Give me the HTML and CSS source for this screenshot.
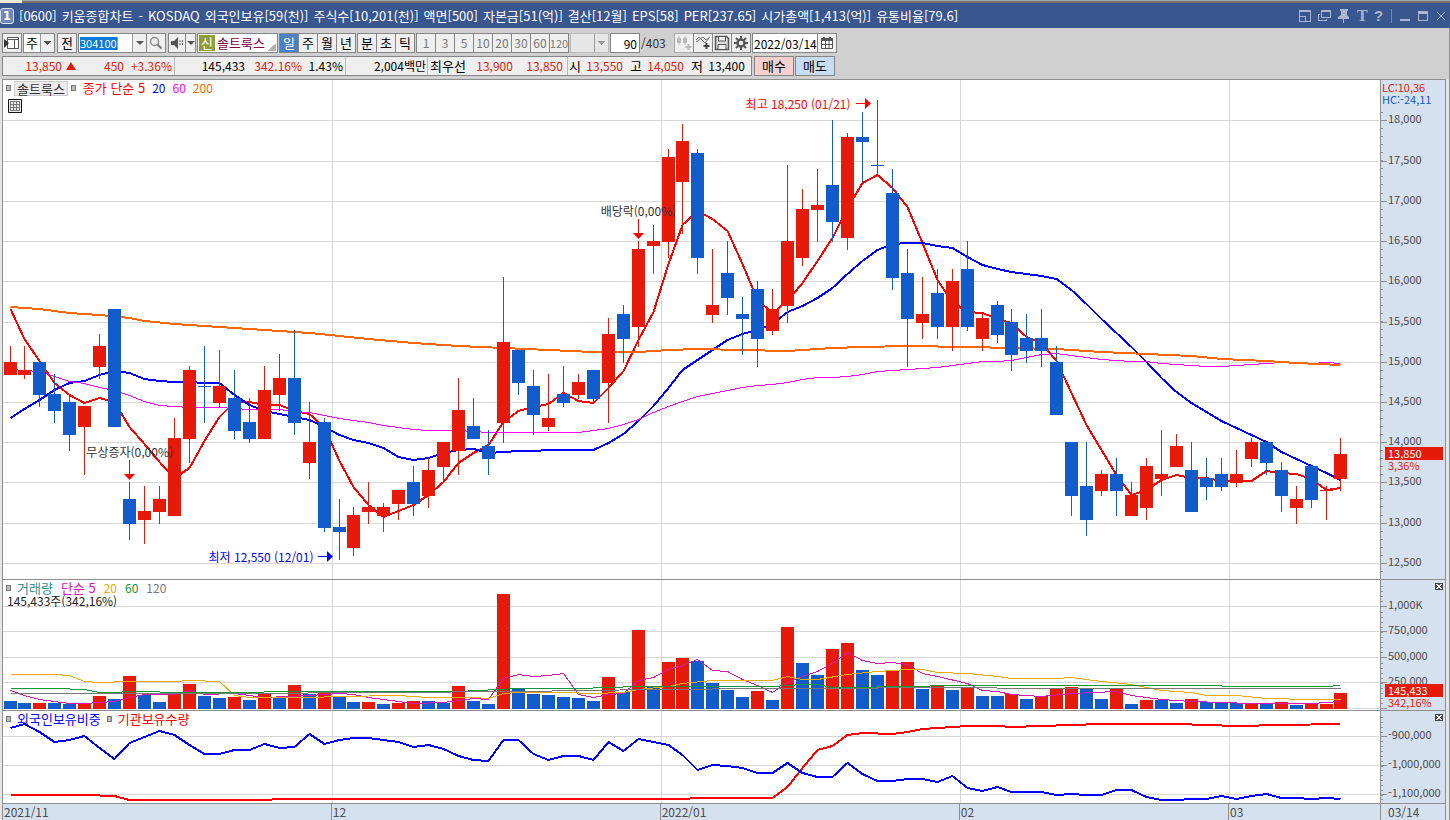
FILE: index.html
```
<!DOCTYPE html>
<html lang="ko">
<head>
<meta charset="utf-8">
<title>[0600] 키움종합차트</title>
<link rel="stylesheet" href="styles.css">
</head>
<body>
<div class="edge"><span class="edge-tab"></span></div>
<header class="titlebar">
  <span class="win-no">1</span>
  <h1 class="title"><span>[0600]</span> <span>키움종합차트</span> <span>-</span> <span>KOSDAQ</span> <span>외국인보유[59(천)]</span> <span>주식수[10,201(천)]</span> <span>액면[500]</span> <span>자본금[51(억)]</span> <span>결산[12월]</span> <span>EPS[58]</span> <span>PER[237.65]</span> <span>시가총액[1,413(억)]</span> <span>유통비율[79.6]</span></h1>
  <div class="win-tools">
    <button aria-label="화면 분할"><svg width="12" height="13" viewBox="0 0 12 13"><path d="M.5 1.500h11v11H.5zM0 2.500h12M1 7.500h5.500V12" class="ln crisp"/></svg></button>
    <button aria-label="화면 복사"><svg width="13" height="13" viewBox="0 0 13 13"><path d="M3.500 1.500h9v7h-9zM3 2.500h10M2 5.500H.5v6h8V10" class="ln crisp"/></svg></button>
    <button aria-label="고정"><svg width="12" height="14" viewBox="0 0 12 14"><path d="M2 0h8v2H9v4l2 2v2H6v4H5v-4H0V8l3-2V2H2z" class="fl"/></svg></button>
    <button aria-label="글꼴" class="glyph serif">T</button>
    <button aria-label="도움말" class="glyph">?</button>
    <span class="sep"></span>
    <button aria-label="최소화"><svg width="11" height="13" viewBox="0 0 11 13"><path d="M0 10h10v2H0z" class="fl"/></svg></button>
    <button aria-label="최대화"><svg width="11" height="13" viewBox="0 0 11 13"><path d="M0 2h10v10H0zM1 5v6h8V5z" fill-rule="evenodd" class="fl"/></svg></button>
    <button aria-label="닫기"><svg width="10" height="13" viewBox="0 0 10 13"><path d="M1 3l8 8M9 3l-8 8" class="ln"/></svg></button>
  </div>
</header>

<section class="toolbar">
  <div class="bar">
    <button class="btn w20" aria-label="메뉴 펼치기"><svg width="16" height="16" viewBox="0 0 16 16"><path d="M3.500 2.500h11v11h-11zM3 4.500h12M10.500 4v9" fill="#fff" stroke="#555"/><path d="M0 4l5 4-5 5z" fill="#333"/></svg></button>
    <select class="pick w31" aria-label="종목 구분"><option>주</option></select>
    <button class="btn w20 gap">전</button>
    <div class="code"><input type="text" value="304100" aria-label="종목코드" class="code-in"><button class="drop" aria-label="종목 목록"></button></div>
    <button class="btn w20 join" aria-label="검색"><svg width="14" height="14" viewBox="0 0 14 14"><circle cx="5.500" cy="5.500" r="4" fill="none" stroke="#8a8a8a" stroke-width="1.500"/><path d="M8.500 8.500l4 4" stroke="#777" stroke-width="2"/></svg></button>
    <button class="btn w18 gap" aria-label="소리"><svg width="14" height="14" viewBox="0 0 14 14"><path d="M1 5h3l4-4v12L4 9H1z" fill="#555"/><path d="M10 4v6M12.500 4v6" stroke="#666" stroke-dasharray="2 1"/></svg></button>
    <button class="drop framed" aria-label="소리 설정"></button>
    <div class="stock"><span class="badge">신</span><span class="name">솔트룩스</span></div>
    <div class="group"><button class="on">일</button><button>주</button><button>월</button><button>년</button></div>
    <div class="group"><button>분</button><button>초</button><button>틱</button></div>
    <div class="group off"><button disabled>1</button><button disabled>3</button><button disabled>5</button><button disabled>10</button><button disabled>20</button><button disabled>30</button><button disabled>60</button><button disabled>120</button></div>
    <select class="pick w39 dim" aria-label="분틱 간격" disabled><option></option></select>
    <input class="count" type="text" value="90" aria-label="조회 봉수"><span class="total">/403</span>
    <div class="icons">
      <button class="btn w20 dim" aria-label="봉 추가"><svg width="16" height="16" viewBox="0 0 16 16"><path d="M1 3h4v5H1zM7 3h4v5H7zM2.500 1h1v9h-1zM8.500 1h1v9h-1z" fill="#bbb"/><path d="M12.500 9v6M9.500 12h6" stroke="#bbb" stroke-width="2"/></svg></button>
      <button class="btn w20" aria-label="지표 추가"><svg width="16" height="16" viewBox="0 0 16 16"><path d="M1 5l3-3 6 6 4-5M1 7l3-2 4-3 3 3 4-3" fill="none" stroke="#777"/><path d="M11.500 8v6M8.500 11h6" stroke="#444" stroke-width="2"/></svg></button>
      <button class="btn w20" aria-label="저장"><svg width="16" height="16" viewBox="0 0 16 16"><path d="M1.500 1.500h11l2 2v11h-13z" fill="#ddd" stroke="#555" stroke-width="1.500"/><path d="M4.500 2v4h7V2M4 14V9.500h8V14" fill="#eee" stroke="#555"/></svg></button>
      <button class="btn w20" aria-label="설정"><svg width="14" height="14" viewBox="0 0 14 14"><circle cx="7" cy="7" r="3.500" fill="none" stroke="#555" stroke-width="2.500"/><path d="M7 0v3M7 11v3M0 7h3M11 7h3M2 2l2 2M10 10l2 2M12 2l-2 2M4 10l-2 2" stroke="#555" stroke-width="2"/></svg></button>
    </div>
    <div class="date"><input type="text" value="2022/03/14" aria-label="조회 일자"><button class="btn w20" aria-label="달력"><svg width="12" height="12" viewBox="0 0 12 12"><path d="M.5 1.500h11v10H.5zM4.500 4v7M8 4v7M1 7.500h10" fill="#fff" stroke="#555"/><path d="M0 1h12v3H0zM2 0h2v2H2zM8 0h2v2H8z" fill="#555"/></svg></button></div>
  </div>
  <div class="bar">
    <div class="quote">
      <div class="cell c1 up"><span class="q1">13,850</span><i class="tri"></i><span class="q2">450</span><span class="q3">+3.36%</span></div>
      <div class="cell c2"><span class="q4">145,433</span><span class="q5 up">342.16%</span><span class="q6">1.43%</span></div>
      <div class="cell c3"><span class="q7">2,004백만</span></div>
      <div class="cell c4"><span class="tag">최우선</span><span class="q8 up">13,900</span><span class="q9 up">13,850</span></div>
      <div class="cell c5"><span class="tag">시</span><span class="q10 up">13,550</span><span class="tag">고</span><span class="q10 up">14,050</span><span class="tag">저</span><span class="q10">13,400</span></div>
    </div>
    <button class="deal buy">매수</button><button class="deal sell">매도</button>
  </div>
</section>

<main class="chart">
  <section class="pane price">
    <div class="plot">
      <svg id="price" viewBox="3 80 1377 499" preserveAspectRatio="none"></svg>
      <div class="legend"><i class="sq"></i><button class="chip">솔트룩스</button><i class="sq"></i><span class="l-red">종가 단순 5</span><span class="l-blue num">20</span><span class="l-mag num">60</span><span class="l-org num">200</span></div>
      <button class="grid-btn" aria-label="데이터 표"><svg width="14" height="14" viewBox="0 0 14 14"><path d="M.5.5h13v13H.5z" fill="#eee" stroke="#111"/><path d="M2.500 2.500h9v9h-9zM2.500 5.500h9M2.500 8.500h9M5.500 3v9M8.500 3v9" fill="none" stroke="#777"/></svg></button>
      <div class="note high"><span>최고 18,250 (01/21)</span><svg width="15" height="12" viewBox="0 0 15 12"><path d="M0 5h9V0l6 5.500L9 11V6H0z"/></svg></div>
      <div class="note low"><span>최저 12,550 (12/01)</span><svg width="15" height="12" viewBox="0 0 15 12"><path d="M0 5h9V0l6 5.500L9 11V6H0z"/></svg></div>
      <div class="event ev1"><span>무상증자(0,00%)</span><svg width="11" height="20" viewBox="0 0 11 20"><path d="M5 0h1v14h5l-5.500 6L0 14h5z"/></svg></div>
      <div class="event ev2"><span>배당락(0,00%)</span><svg width="11" height="20" viewBox="0 0 11 20"><path d="M5 0h1v14h5l-5.500 6L0 14h5z"/></svg></div>
    </div>
    <svg class="axis" id="priceAxis" width="64" height="499" viewBox="1381 80 64 499"></svg>
  </section>
  <section class="pane volume">
    <div class="plot">
      <svg id="volume" viewBox="3 580 1377 130" preserveAspectRatio="none"></svg>
      <div class="legend"><i class="sq"></i><span class="l-teal">거래량</span><span class="l-pink">단순 5</span><span class="l-gold num">20</span><span class="l-green num">60</span><span class="l-grey num">120</span></div>
      <div class="reading">145,433주(342,16%)</div>
    </div>
    <svg class="axis" id="volumeAxis" width="64" height="130" viewBox="1381 580 64 130"></svg>
    <button class="close" aria-label="거래량 닫기"></button>
  </section>
  <section class="pane holding">
    <div class="plot">
      <svg id="holding" viewBox="3 711 1377 92" preserveAspectRatio="none"></svg>
      <div class="legend"><i class="sq"></i><span class="l-blue">외국인보유비중</span><i class="sq"></i><span class="l-red">기관보유수량</span></div>
    </div>
    <svg class="axis" id="holdingAxis" width="64" height="92" viewBox="1381 711 64 92"></svg>
    <button class="close" aria-label="보유비중 닫기"></button>
  </section>
  <footer class="months"><span class="m1">2021/11</span><span class="m2">12</span><span class="m3">2022/01</span><span class="m4">02</span><span class="m5">03</span><span class="m6">03/14</span></footer>
</main>
<script src="chart.js"></script>
</body>
</html>
```
FILE: styles.css
```
* { box-sizing: border-box; }
body { margin: 0; background: #d0d0d0; color: #000; font: 13px/16px "Noto Sans CJK KR", sans-serif; }
button, input, select { font: inherit; color: inherit; margin: 0; padding: 0; border-radius: 0; outline: 0; }
svg { display: block; flex: none; }
.edge { height: 3px; background: #a4a4a4; border-bottom: 2px solid #747470; display: flex; }
.edge-tab { width: 22px; height: 3px; background: #ecebd8; }

.titlebar { height: 25px; background: #39568f; color: #fff; display: flex; align-items: center; }
.win-no { width: 14px; height: 16px; border: 1px solid #dfe6f3; border-radius: 3px; background: #6e86b8; font: bold 12px/14px "DejaVu Sans", sans-serif; text-align: center; }
.title { margin: 0 0 0 5px; font-size: 13px; font-weight: normal; line-height: 16px; white-space: nowrap; flex: 1; display: flex; gap: 5px; }
.win-tools { display: flex; align-items: center; gap: 7px; padding-right: 4px; }
.win-tools button { border: 0; background: none; color: #a9b7d4; }
.ln { fill: none; stroke: #a9b7d4; }
.crisp { shape-rendering: crispEdges; }
.fl { fill: #a9b7d4; }
.glyph { width: 9px; font: bold 15px/16px "Liberation Sans", sans-serif; }
.win-tools .serif { font-family: "Liberation Serif", serif; width: 10px; font-size: 16px; }
.sep { width: 1px; height: 14px; background: #7f8797; margin: 0 1px; }

.toolbar { height: 51px; padding: 5px 0 0 2px; display: flex; flex-direction: column; gap: 3px; border-right: 1px solid #909090; }
.bar { display: flex; height: 20px; }
.btn, .drop, .group button { border: 1px solid #858585; background: #efefef; height: 20px; display: flex; align-items: center; justify-content: center; flex: none; }
.w20 { width: 20px; }
.w18 { width: 18px; }
.w31 { width: 32px; }
.w39 { width: 39px; }
.gap { margin-left: 2px; }
.pick { appearance: none; height: 20px; border: 1px solid #858585; padding-left: 2px; margin-left: 1px; flex: none;
  background: linear-gradient(#555, #555) right 3px top 7px / 7px 1px no-repeat, linear-gradient(#555, #555) right 4px top 8px / 5px 1px no-repeat, linear-gradient(#555, #555) right 5px top 9px / 3px 1px no-repeat, linear-gradient(#555, #555) right 6px top 10px / 1px 1px no-repeat, linear-gradient(#999, #999) right 13px top 0 / 1px 100% no-repeat, linear-gradient(90deg, #fff 16px, #efefef 16px); }
.pick.dim { opacity: 1; filter: opacity(.6); background-image: linear-gradient(#777, #777), linear-gradient(#777, #777), linear-gradient(#777, #777), linear-gradient(#777, #777), linear-gradient(#777, #777), linear-gradient(#f4f4f4, #f4f4f4); }
.code { display: flex; width: 69px; height: 20px; margin-left: 1px; border: 1px solid #858585; background: #fff; flex: none; }
.code-in { width: 38px; height: 13px; margin: 3px 0 0 1px; border: 0; border-right: 1px solid #f08030; background: #0a78d7; color: #fff; font-size: 11px; line-height: 13px; }
.drop { position: relative; width: 14px; }
.drop::after { content: ""; border: 4px solid transparent; border-top-color: #555; border-bottom: 0; }
.code .drop { height: 18px; border: 0; margin-left: auto; border-left: 1px solid #999; }
.framed { width: 11px; margin-left: -1px; }
.join { margin-left: -1px; }
.stock { display: flex; width: 81px; height: 20px; margin-left: 1px; padding: 1px; border: 1px solid #858585; flex: none; background: linear-gradient(135deg, #fff 50%, #b0b0b0 50%) right 1px bottom 1px / 8px 8px no-repeat #fff; }
.badge { width: 16px; background: #8f9c38; color: #fff; text-align: center; }
.name { color: #7d0345; margin-left: 2px; }
.group { display: flex; margin-left: 1px; flex: none; }
.group button { width: 20px; margin-right: -1px; }
.group button:last-child { margin-right: 0; }
.group .on { background: #4a80c4; color: #fff; }
.group.off button { color: #777; font-size: 12px; }
.group.off button:last-child { font-size: 11px; }
.group + .group { margin-left: 1px; }
.count { width: 30px; height: 20px; margin-left: 1px; border: 1px solid #858585; text-align: right; padding-right: 2px; background: #fff; font-size: 12px; }
.total { width: 34px; line-height: 20px; padding-left: 1px; color: #333; font-size: 12px; }
.icons { display: flex; }
.icons .btn + .btn { margin-left: -1px; }
.date { display: flex; margin-left: 1px; }
.date input { width: 66px; height: 20px; border: 1px solid #858585; padding-left: 1px; background: #fff; font-size: 12px; }
.date .btn { margin-left: -1px; }
.dim { border-color: #aaa; }

.quote { width: 750px; display: flex; border: 1px solid #858585; background: #efefef; font-size: 12px; line-height: 18px; flex: none; }
.cell { display: flex; border-right: 1px solid #bbb; text-align: right; white-space: nowrap; align-items: center; }
.cell:last-child { border: 0; }
.tag { font-size: 13px; }
.c1 { width: 172px; }
.c2 { width: 171px; }
.c3 { width: 82px; }
.c4 { width: 140px; padding-left: 2px; }
.c5 { flex: 1; padding-left: 1px; gap: 7px; }
.c5 .q10 { margin-left: -7px; }
.up { color: #e71a0a; }
.q1 { width: 59px; }
.tri { margin-left: 4px; border: 5px solid transparent; border-top: 0; border-bottom: 8px solid #e71a0a; }
.q2 { width: 48px; }
.q3 { width: 48px; }
.q4 { width: 70px; }
.q5 { width: 57px; }
.q6 { width: 41px; }
.q7 { width: 80px; }
.q8 { width: 47px; }
.q9 { width: 50px; }
.q10 { width: 42px; }
.deal { width: 40px; border: 1px solid #858585; margin-left: 2px; }
.deal + .deal { margin-left: 1px; }
.buy { background: #f5d0ce; }
.sell { background: #c8ddf4; }

.chart { border-left: 1px solid #8e8e8e; border-right: 1px solid #8e8e8e; border-top: 1px solid #8e8e8e; background: #fff; margin: 0 4px 0 2px; box-shadow: -2px 0 #e6e6e6, 3px 0 #e6e6e6, 4px 0 #909090; }
.pane { display: flex; border-bottom: 1px solid #8e8e8e; position: relative; }
.plot { flex: 1; position: relative; min-width: 0; }
.plot > svg { width: 100%; }
.price .plot > svg { height: 499px; }
.volume .plot > svg { height: 130px; }
.holding .plot > svg { height: 92px; }
.axis { background: #d6e1ef; border-left: 1px solid #8e8e8e; width: 65px; }
.axis text { font: 11px "Noto Sans CJK KR", sans-serif; fill: #4a4a4a; }
.axis .a-red { fill: #e71a0a; }
.axis .a-blue { fill: #115bca; }
.axis .a-white { fill: #fff; }
.legend { position: absolute; top: 1px; left: 3px; display: flex; align-items: center; height: 14px; line-height: 14px; gap: 6px; white-space: nowrap; }
.legend .num { font-size: 12px; }
.sq { width: 5px; height: 6px; border: 1px solid #777; background: #bbb; }
.chip { border: 1px solid #ccc; background: #ececec; color: #333; height: 15px; line-height: 13px; padding: 0 2px; margin: 0 -4px; }
.price .legend { gap: 7px; }
.volume .legend span + span { margin-left: 2px; }
.l-red { color: #f00; }
.l-blue { color: #00f; }
.l-mag { color: #f0f; }
.l-org { color: #f60; }
.l-teal { color: #2f8f8f; }
.l-pink { color: #d916b4; }
.l-gold { color: #eeaa00; }
.l-green { color: #0f9637; }
.l-grey { color: #777; }
.reading { position: absolute; left: 4px; top: 14px; font-size: 12px; line-height: 13px; color: #222; }
.grid-btn { position: absolute; left: 5px; top: 19px; border: 0; background: none; }
.note { position: absolute; display: flex; align-items: center; gap: 5px; font-size: 12px; line-height: 14px; white-space: nowrap; }
.high { right: 37%; top: 17px; color: #f00; fill: #f00; }
.low { right: 76%; top: 470px; color: #00f; fill: #00f; }
.event { position: absolute; width: 96px; display: flex; flex-direction: column; align-items: center; gap: 1px; font-size: 12px; line-height: 14px; color: #333; fill: #f00; white-space: nowrap; }
.ev1 { left: calc(9.2% - 48px); top: 365px; }
.ev2 { left: calc(46.15% - 48px); top: 124px; }
.close { position: absolute; right: 2px; top: 3px; width: 8px; height: 7px; border: 1px solid #444; background: linear-gradient(45deg, transparent 44%, #eee 44% 56%, transparent 56%), linear-gradient(-45deg, transparent 44%, #eee 44% 56%, transparent 56%), #444; }
.months { display: flex; height: 16px; background: #d6e1ef; color: #4a4a4a; font-size: 12px; line-height: 16px; }
.months span { border-left: 1px solid #8e8e8e; padding-left: 1px; }
.months .m1 { border: 0; flex: 329; }
.months .m2 { flex: 329; }
.months .m3 { flex: 299; }
.months .m4 { flex: 269; }
.months .m5 { flex: 151; }
.months .m6 { flex: none; width: 65px; padding-left: 7px; }
```
FILE: chart.js
```
const RED = '#e71a0a', BLUE = '#115bca';
// 15px per session, one pixel taken back every 22 sessions
const x = i => 10 + 15 * i - Math.floor((i + 21) / 22);

// one candle per entry: direction, high, body top, body bottom, low
const candles = `r346 362 375 375|r346 370 375 379|b362 362 395 407|b374 394 411 423|b394 402 435 451|r406 406 427 475|r334 346 367 379|b309 309 427 427|b482 499 524 540|r486 511 520 544|r486 499 512 524|r418 438 516 516|r366 370 439 463|b346 386 387 423|r350 386 403 407|b370 398 431 439|b398 422 439 443|r366 390 439 439|r354 378 395 411|b330 378 423 435|r402 442 463 479|b418 422 528 532|b499 527 532 560|r507 515 548 556|r482 507 512 524|r503 507 516 532|r490 490 504 520|b466 482 504 516|r458 470 496 508|r442 442 467 482|r378 410 451 475|b398 426 439 439|b430 446 459 475|r277 342 423 443|b350 350 383 395|b370 386 415 435|r374 418 427 431|b366 394 403 407|r374 382 395 399|b370 370 399 403|r318 334 383 423|b305 314 339 363|r241 249 327 347|r225 241 246 274|r149 157 242 258|r124 141 182 234|b149 153 258 274|r249 305 315 323|b241 273 298 315|b297 314 319 355|b281 289 339 367|r289 309 331 335|r165 241 306 323|r189 209 258 266|r169 205 210 242|b120 185 222 242|r133 137 238 250|b112 137 142 182|b100 165 166 174|b169 193 278 290|b249 273 319 367|r277 314 323 339|b269 293 327 339|r269 281 327 351|b241 269 327 331|r314 318 339 351|b301 305 335 343|b309 322 355 371|b314 338 351 363|b309 338 351 367|b346 362 415 415|b442 442 496 516|b442 486 520 536|r470 474 491 496|b458 474 491 516|r482 495 516 516|r458 466 508 520|r430 474 479 496|r434 446 467 467|b442 470 512 512|b458 478 487 500|b458 474 487 491|r450 474 483 487|r438 442 459 467|b442 442 463 475|b462 470 496 512|r486 499 508 524|b466 466 500 508|r486 490 491 520|r438 454 479 491`.split('|');

const volumes = 'b701 b703 r703 b703 b704 r704 r696 b699 r676 b695 b702 r693 r684 b696 b698 r697 b700 r694 b698 r685 b694 r693 b696 b702 r702 b704 r703 r701 b701 b703 r686 b701 b704 r594 b688 b694 b695 b697 b698 b701 r677 b692 r630 b687 r662 r658 b661 b683 b690 b697 r691 b700 r627 b663 b675 r649 r643 b670 b675 r670 r662 b689 r686 b690 r687 b696 b696 r694 b699 r696 r689 r687 b689 b699 r689 b704 r700 b700 b703 r699 b702 b703 b703 r703 b704 r702 b705 r704 r704 r693'.split(' ');

const ma5 = [309,339,361,383,395,403,398,402,427,444,462,478,468,441,417,402,402,405,405,411,414,428,461,487,505,517,511,505,495,482,463,453,445,422,411,407,404,393,401,403,388,371,340,312,264,225,211,219,231,264,300,313,301,283,261,238,208,183,175,188,207,243,280,302,312,313,319,323,337,343,361,393,425,450,475,495,490,480,475,478,478,481,481,481,471,473,474,479,490,488];
const ma20 = [418,409,400,390,383,381,375,371,373,379,381,382,382,383,383,395,405,411,414,417,420,427,435,440,443,448,457,460,458,453,450,449,453,452,451,451,450,450,450,450,443,434,421,406,388,370,360,350,340,334,330,324,312,306,298,288,274,261,250,244,243,243,246,248,257,265,269,272,274,276,279,290,304,319,333,347,362,378,392,403,412,421,428,435,442,452,459,466,473,480];
const ma60 = [369,370,371,376,381,383,387,390,395,401,405,406,407,407,407,408,409,409,409,411,412,415,418,420,422,425,427,429,430,430,430,431,432,432,432,432,432,432,432,430,428,424,419,412,406,401,396,393,390,387,385,384,382,379,377,377,376,374,371,370,369,368,367,365,363,361,361,360,357,354,353,355,357,359,360,361,361,363,364,365,366,366,365,364,363,362,362,363,362,363];
const foreign = [728,724,732,742,740,736,748,759,743,737,731,735,745,754,754,750,750,744,748,747,734,744,740,738,738,740,742,747,745,749,756,760,761,740,740,754,760,756,756,760,742,751,739,742,745,755,770,765,766,768,773,773,763,773,777,777,763,774,781,781,779,779,782,776,788,791,787,792,792,792,795,794,795,795,790,790,797,800,800,799,799,796,799,796,794,798,798,799,798,799];

// sparse series: index, value pairs joined by straight segments
const ma200 = [0,307,2,309,4,313,6,315,8,318,9,321,11,324,13,326,16,329,20,333,22,336,24,339,27,343,30,346,33,348,36,350,39,352,42,352,44,350,46,349,49,350,52,351,55,348,57,347,60,346,64,347,67,348,70,349,73,352,76,354,79,356,81,359,84,361,86,363,89,365];
const vol5 = [0,690,1,695,2,699,4,703,5,703,7,701,8,697,9,694,11,694,12,690,13,694,15,693,17,697,20,695,22,693,23,694,24,697,26,701,27,703,29,702,30,700,31,698,32,699,33,678,34,674,35,676,36,675,37,673,38,694,39,697,40,694,41,693,42,680,43,677,44,669,45,665,46,659,47,670,48,671,49,679,50,685,51,692,52,682,53,676,54,671,55,663,56,652,57,660,58,663,59,662,60,664,61,673,62,676,64,683,65,690,66,691,67,694,69,696,71,693,74,691,75,695,77,699,79,701,83,703,87,703,89,701];
const vol20 = [0,674,3,674,4,675,5,681,6,682,8,681,11,681,12,680,14,681,15,695,16,697,20,697,22,696,26,695,28,697,31,697,32,698,33,693,34,692,37,692,39,693,41,692,42,689,44,686,45,683,47,680,51,680,52,676,53,679,54,679,56,674,58,671,60,669,61,669,62,672,64,673,66,676,67,678,70,678,71,677,73,681,75,684,77,690,79,692,80,695,82,695,84,698,87,699,89,699];
const vol60 = [0,688,3,688,5,689,6,692,9,691,11,692,15,692,19,691,30,691,34,688,38,688,42,686,51,686,53,684,54,684,55,687,61,686,62,685,80,685,82,686,88,686,89,685];
const vol120 = [0,693,15,693,25,692,34,691,43,689,51,688,65,687,67,688,89,688];
const institution = [0,795,5,795,7,796,8,800,17,800,18,799,45,799,46,798,51,798,52,787,53,768,54,750,55,746,56,735,57,733,59,734,60,732,61,729,64,726,66,726,67,727,69,726,73,724,78,724,82,726,85,725,89,724];

const pairs = a => a.reduce((o, v, i) => (i % 2 ? o[o.length - 1].push(v) : o.push([v]), o), []);
const full = a => a.map((v, i) => [i, v]);
const line = (pts, color, w) => {
  const off = w % 2 ? 0.5 : 0;
  return `<polyline points="${pts.map(([i, v]) => (x(i) + 0.5) + ',' + (v + off)).join(' ')}" fill="none" stroke="${color}" stroke-width="${w}" shape-rendering="crispEdges"/>`;
};
const rect = (l, t, w, h, c) => `<rect x="${l}" y="${t}" width="${w}" height="${h}" fill="${c}" shape-rendering="crispEdges"/>`;
const grid = (rows, top, height) =>
  rows.map(y => rect(3, y, 1376, 1, '#d6d6d6')).join('') +
  [332, 661, 960, 1229].map(v => rect(v, top, 1, height, '#d6d6d6')).join('');
const fill = c => (c === 'r' ? RED : BLUE);

const priceRows = [120, 161, 201, 241, 281, 322, 362, 402, 442, 482, 523, 563];
const volRows = [606, 631, 657, 682, 708];
const holdRows = [736, 765, 794];

document.getElementById('price').innerHTML =
  grid(priceRows, 80, 499) +
  line(full(ma5), '#f00', 2) + line(full(ma20), '#00f', 2) + line(full(ma60), '#f0f', 1) + line(pairs(ma200), '#f60', 2) +
  candles.map((s, i) => {
    const [h, t, b, l] = s.slice(1).split(' ').map(Number);
    return rect(x(i), h, 1, l - h, fill(s[0])) + rect(x(i) - 6, t, 13, b - t, fill(s[0]));
  }).join('');

document.getElementById('volume').innerHTML =
  grid(volRows, 580, 130) +
  volumes.map((s, i) => rect(x(i) - 6, +s.slice(1), 13, 709 - s.slice(1), fill(s[0]))).join('') +
  line(pairs(vol5), '#d916b4', 1) + line(pairs(vol20), '#ea0', 1) + line(pairs(vol60), '#0f9637', 1) + line(pairs(vol120), '#777', 1);

document.getElementById('holding').innerHTML =
  grid(holdRows, 711, 92) + line(pairs(institution), '#f00', 2) + line(full(foreign), '#00f', 2);

const text = (s, y, cls = '', left = 1388) => `<text x="${left}" y="${y}" class="${cls}">${s}</text>`;
const ticks = (rows, labels, from, to, step) => {
  let out = '';
  for (let y = from; y < to; y += step) out += rect(1381, Math.round(y), 2, 1, '#8e8e8e');
  rows.forEach((y, i) => {
    out += rect(1381, y, 6, 1, '#8e8e8e');
    if (labels[i]) out += text(labels[i], y + 3);
  });
  return out;
};

document.getElementById('priceAxis').innerHTML =
  ticks(priceRows, priceRows.map((_, i) => (18000 - i * 500).toLocaleString('en-US')), 112, 575, 8.05) +
  text('LC:10,36', 92, 'a-red', 1382) + text('HC:-24,11', 104, 'a-blue', 1382) +
  rect(1385, 447, 58, 13, RED) + text('13,850', 458, 'a-white') + text('3,36%', 470, 'a-red');
document.getElementById('volumeAxis').innerHTML =
  ticks(volRows, ['1,000K', '750,000', '500,000', '250,000'], 586, 708, 5.1) +
  rect(1385, 684, 58, 13, RED) + text('145,433', 695, 'a-white') + text('342,16%', 707, 'a-red');
document.getElementById('holdingAxis').innerHTML =
  ticks(holdRows, ['-900,000', '-1,000,000', '-1,100,000'], 717, 802, 4.85);
```
